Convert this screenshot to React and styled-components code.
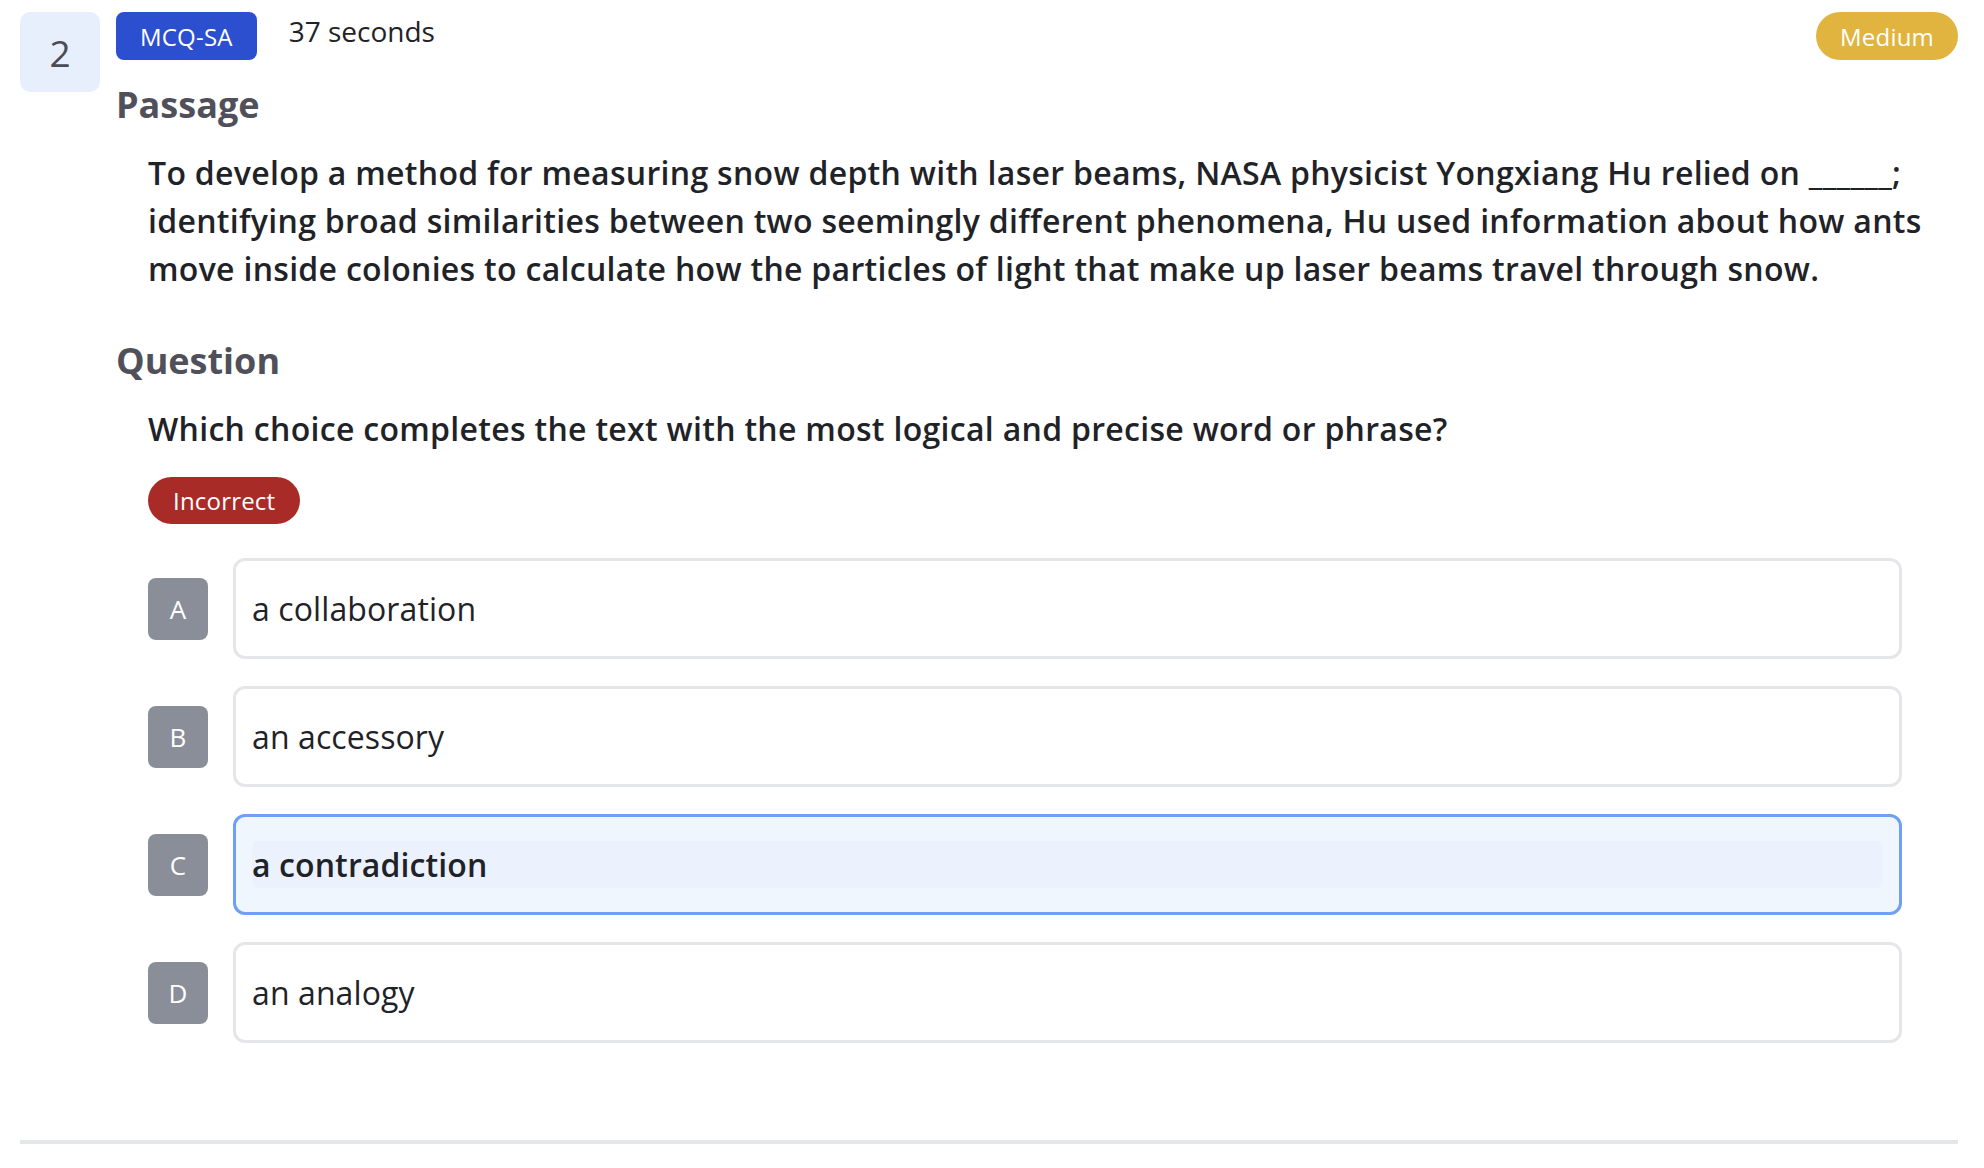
import React from "react";
import styled, { createGlobalStyle } from "styled-components";

const GlobalStyle = createGlobalStyle`
  html, body { margin: 0; padding: 0; background: #ffffff; }
  body { font-family: "Open Sans", "Noto Sans", "Liberation Sans", sans-serif; color: #1f2328; }
  * { box-sizing: border-box; }
`;

const Card = styled.div`
  margin: 12px 26px 0 20px;
  padding-bottom: 97px;
  border-bottom: 4px solid #e5e6ea;
  display: flex;
  gap: 16px;
`;

const NumberBox = styled.div`
  flex-shrink: 0;
  width: 80px;
  height: 80px;
  border-radius: 10px;
  background: #e8effc;
  display: flex;
  align-items: center;
  justify-content: center;
  font-size: 37px;
  font-weight: 500;
  color: #4b4b55;
  line-height: 1;
`;

const Content = styled.div`
  flex: 1;
  min-width: 0;
  display: flex;
  flex-direction: column;
`;

const HeaderRow = styled.div`
  display: flex;
  align-items: flex-start;
  gap: 32px;
`;

const Pill = styled.span`
  display: inline-flex;
  align-items: center;
  justify-content: center;
  height: ${(p) => p.$h || 48}px;
  padding: 0 ${(p) => p.$px || 24}px;
  border-radius: ${(p) => (p.$round ? "999px" : "8px")};
  background: ${(p) => p.$bg};
  color: #ffffff;
  font-size: 24px;
  font-weight: 500;
  letter-spacing: 0.2px;
  white-space: nowrap;
  flex-shrink: 0;
  ${(p) => (p.$right ? "margin-left: auto;" : "")}
`;

const TimeText = styled.span`
  font-size: 28px;
  line-height: 38px;
  font-weight: 500;
  color: #1f2328;
`;

const Heading = styled.h2`
  margin: ${(p) => p.$mt}px 0 20px 0;
  font-size: 36px;
  line-height: 49px;
  font-weight: 700;
  color: #50505a;
`;

const BodyText = styled.p`
  margin: 0;
  padding-left: 32px;
  font-size: 32px;
  line-height: 48px;
  font-weight: 600;
  letter-spacing: 0.3px;
  color: #1f2328;
`;

const StatusRow = styled.div`
  padding-left: 32px;
  margin-top: 24px;
  display: flex;
`;

const Options = styled.div`
  margin: 34px 56px 0 32px;
  display: flex;
  flex-direction: column;
  gap: 27px;
`;

const OptionRow = styled.div`
  display: flex;
  align-items: center;
  gap: 25px;
`;

const Letter = styled.div`
  flex-shrink: 0;
  width: 60px;
  height: 62px;
  border-radius: 8px;
  background: #8a8e98;
  color: #ffffff;
  font-size: 26px;
  font-weight: 500;
  display: flex;
  align-items: center;
  justify-content: center;
`;

const OptionBox = styled.div`
  flex: 1;
  height: 101px;
  border: 3px solid ${(p) => (p.$selected ? "#6fa0f1" : "#e5e6ea")};
  background: ${(p) => (p.$selected ? "#f0f6fe" : "#ffffff")};
  border-radius: 12px;
  padding: 0 16px 0 16px;
  display: flex;
  align-items: center;
  font-size: 32px;
  font-weight: ${(p) => (p.$selected ? 600 : 400)};
  letter-spacing: 0.1px;
  color: #1f2328;
`;

const Highlight = styled.span`
  flex: 1;
  height: 47px;
  display: flex;
  align-items: center;
  border-radius: 6px;
  background: #ebf2fe;
`;

const options = [
  { key: "A", text: "a collaboration" },
  { key: "B", text: "an accessory" },
  { key: "C", text: "a contradiction", selected: true },
  { key: "D", text: "an analogy" },
];

export default function App() {
  return (
    <>
      <GlobalStyle />
      <Card>
        <NumberBox>2</NumberBox>
        <Content>
          <HeaderRow>
            <Pill $bg="#2c4fd0">MCQ-SA</Pill>
            <TimeText>37 seconds</TimeText>
            <Pill $bg="#e1b43f" $round $right>Medium</Pill>
          </HeaderRow>
          <Heading $mt={20}>Passage</Heading>
          <BodyText>
            To develop a method for measuring snow depth with laser beams, NASA physicist Yongxiang Hu relied on ______; identifying broad similarities between two seemingly different phenomena, Hu used information about how ants move inside colonies to calculate how the particles of light that make up laser beams travel through snow.
          </BodyText>
          <Heading $mt={43}>Question</Heading>
          <BodyText>
            Which choice completes the text with the most logical and precise word or phrase?
          </BodyText>
          <StatusRow>
            <Pill $bg="#a92b27" $round $h={47} $px={25}>Incorrect</Pill>
          </StatusRow>
          <Options>
            {options.map((o) => (
              <OptionRow key={o.key}>
                <Letter>{o.key}</Letter>
                <OptionBox $selected={o.selected}>
                  {o.selected ? <Highlight>{o.text}</Highlight> : o.text}
                </OptionBox>
              </OptionRow>
            ))}
          </Options>
        </Content>
      </Card>
    </>
  );
}
